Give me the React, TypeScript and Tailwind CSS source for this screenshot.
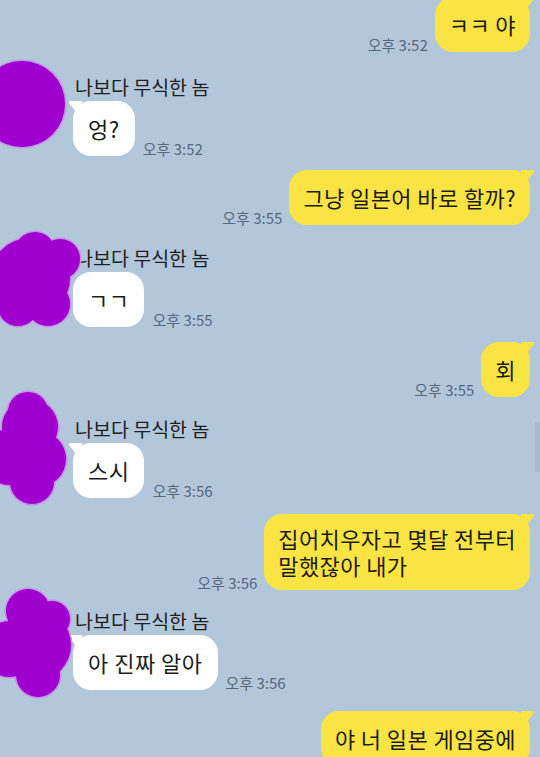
import React from 'react';

const font = { fontFamily: "'Noto Sans CJK KR', 'Noto Sans', sans-serif" };

type Dot = [number, number, number];

function Blob({ dots }: { dots: Dot[] }) {
  return (
    <svg className="absolute left-0 -top-[20px] overflow-visible" width="100" height="130" viewBox="0 0 100 130">
      {dots.map(([x, y, r], i) => (
        <circle key={'h' + i} cx={x} cy={y} r={r + 1.5} fill="#C88FE6" />
      ))}
      {dots.map(([x, y, r], i) => (
        <circle key={'c' + i} cx={x} cy={y} r={r} fill="#A000CF" />
      ))}
    </svg>
  );
}

function MyMsg({ children, time, className = '', pad = 'py-[14px] leading-[27px]' }: { children: React.ReactNode; time: string; className?: string; pad?: string }) {
  return (
    <div className={`flex justify-end items-end gap-[7px] pr-[10px] ${className}`}>
      <span className="text-[15px] leading-[14px] text-[#56687C] whitespace-nowrap">{time}</span>
      <div className={`relative rounded-[18px] bg-[#FAE444] px-[14px] ${pad} text-[22px] tracking-[0.4px] text-[#1c1c1c]`}>
        <span className="relative z-10">{children}</span>
        <svg className="absolute -right-[5px] top-0" width="14" height="16" viewBox="0 0 14 16">
          <path d="M0 0 H10 Q14 0 13 2 L2 16 L0 16 Z" fill="#FAE444" />
        </svg>
      </div>
    </div>
  );
}

function OtherMsg({ children, time, avatar, className = '', tail = true }: { children: React.ReactNode; time: string; avatar: Dot[]; className?: string; tail?: boolean }) {
  return (
    <div className={`relative pl-[73px] ${className}`}>
      <div className="pl-[2px] text-[19.5px] leading-[24px] text-[#1f1f1f]">나보다 무식한 놈</div>
      <div className="mt-[2px] flex items-end gap-[8px]">
        <div className="relative rounded-[18px] bg-white px-[15px] py-[14px] text-[22px] leading-[27px] tracking-[0.5px] text-[#1c1c1c] whitespace-nowrap">
          <span className="relative z-10">{children}</span>
          {tail && (
            <svg className="absolute -left-[5px] top-0" width="14" height="16" viewBox="0 0 14 16">
              <path d="M14 0 H4 Q0 0 1 2 L12 16 L14 16 Z" fill="#fff" />
            </svg>
          )}
        </div>
        <span className="text-[15px] leading-[14px] text-[#56687C] whitespace-nowrap">{time}</span>
      </div>
      <Blob dots={avatar} />
    </div>
  );
}

export default function App() {
  return (
    <div className="relative w-[540px] h-[757px] overflow-hidden bg-[#B2C7DA]" style={font}>
      <div className="flex flex-col">
        <MyMsg time="오후 3:52" className="-mt-[3px]">ㅋㅋ 야</MyMsg>

        <OtherMsg time="오후 3:52" className="mt-[23px]" avatar={[[22, 49, 43]]}>엉?</OtherMsg>

        <MyMsg time="오후 3:55" className="mt-[14px]">그냥 일본어 바로 할까?</MyMsg>

        <OtherMsg
          time="오후 3:55"
          className="mt-[21px]"
          tail={false}
          avatar={[[30, 52, 40], [35, 26, 20], [60, 33, 20], [48, 78, 22], [18, 80, 20]]}
        >
          ㄱㄱ
        </OtherMsg>

        <MyMsg time="오후 3:55" className="mt-[15px]">회</MyMsg>

        <OtherMsg
          time="오후 3:56"
          className="mt-[20px]"
          avatar={[[30, 30, 28], [28, 15, 20], [38, 62, 28], [32, 85, 22], [10, 60, 28]]}
        >
          스시
        </OtherMsg>

        <MyMsg time="오후 3:56" className="mt-[16px]" pad="py-[11px] leading-[27px]">
          집어치우자고 몇달 전부터
          <br />
          말했잖아 내가
        </MyMsg>

        <OtherMsg
          time="오후 3:56"
          className="mt-[19px]"
          avatar={[[35, 56, 36], [28, 22, 22], [52, 30, 18], [38, 86, 22], [10, 60, 28]]}
        >
          아 진짜 알아
        </OtherMsg>

        <MyMsg time="" className="mt-[21px]">야 너 일본 게임중에</MyMsg>
      </div>

      {/* scrollbar */}
      <div className="absolute right-0 top-[422px] h-[50px] w-[5px] bg-[#A7BACE]" />
    </div>
  );
}
